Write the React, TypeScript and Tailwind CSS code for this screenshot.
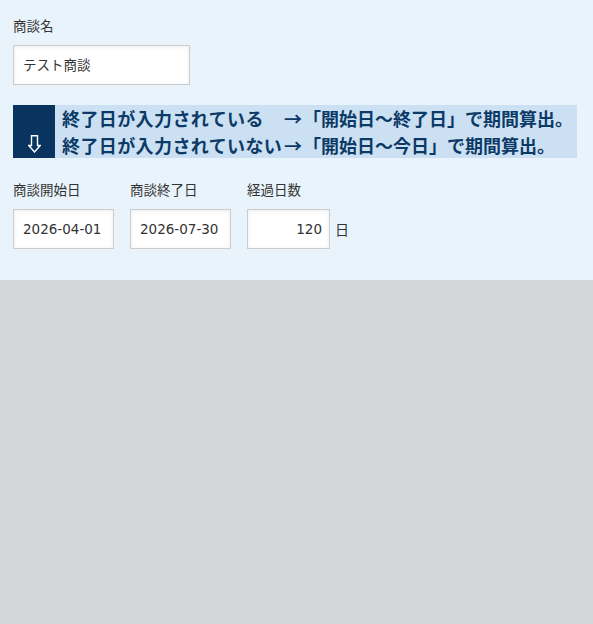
import React from 'react';

const font = { fontFamily: '"DejaVu Sans", "Noto Sans CJK JP", sans-serif' };
const jp = { fontFamily: '"Noto Sans CJK JP", "DejaVu Sans", sans-serif' };

const Field = ({ label, value, width, right }: { label: string; value: string; width: string; right?: boolean }) => (
  <div className="flex flex-col">
    <label className="text-[13.5px] leading-[16px] text-[#333] whitespace-nowrap" style={jp}>
      {label}
    </label>
    <div
      className={`${width} mt-[12px] h-[40px] flex items-center pl-[9px] pr-[7px] bg-white border border-[#cccccc] shadow-[inset_0_1px_4px_rgba(0,0,0,0.08)] text-[13.5px] text-[#333] whitespace-nowrap ${right ? 'justify-end' : ''}`}
    >
      {value}
    </div>
  </div>
);

const DownArrow = () => (
  <svg width="13" height="18" viewBox="0 0 13 18" fill="none" stroke="white" strokeWidth="1.4" strokeLinejoin="miter">
    <path d="M3.5 0.7 H9.5 V10.5 H12.2 L6.5 17 L0.8 10.5 H3.5 Z" />
  </svg>
);

export default function App() {
  return (
    <div className="min-h-[624px] w-full bg-[#d3d6d7]" style={font}>
      <div className="h-[280px] bg-[#e8f3fb] px-[13px] pt-[17px]">
        <Field label="商談名" value="テスト商談" width="w-[177px]" />

        <div className="mt-[20px] flex w-[564px]">
          <div className="w-[42px] shrink-0 bg-[#08345f] flex items-end justify-center pb-[5px]">
            <DownArrow />
          </div>
          <div
            className="flex-1 min-w-0 bg-[#cce0f3] pl-[7px] font-bold text-[18px] leading-[26.5px] text-[#0c3a66] whitespace-nowrap"
            style={jp}
          >
            <div className="grid grid-cols-[222px_max-content]">
              <span className="tracking-[0.4px]">終了日が入力されている</span>
              <span>
                →<span className="ml-[1px]">「開始日～終了日」で期間算出。</span>
              </span>
              <span className="tracking-[0.4px]">終了日が入力されていない</span>
              <span>
                →<span className="ml-[1px]">「開始日～今日」で期間算出。</span>
              </span>
            </div>
          </div>
        </div>

        <div className="mt-[23px] flex gap-[16px] items-end">
          <Field label="商談開始日" value="2026-04-01" width="w-[101px]" />
          <Field label="商談終了日" value="2026-07-30" width="w-[101px]" />
          <div className="flex items-end gap-[5px]">
            <Field label="経過日数" value="120" width="w-[83px]" right />
            <span className="h-[40px] flex items-center text-[14px] text-[#333]" style={jp}>
              日
            </span>
          </div>
        </div>
      </div>
    </div>
  );
}
